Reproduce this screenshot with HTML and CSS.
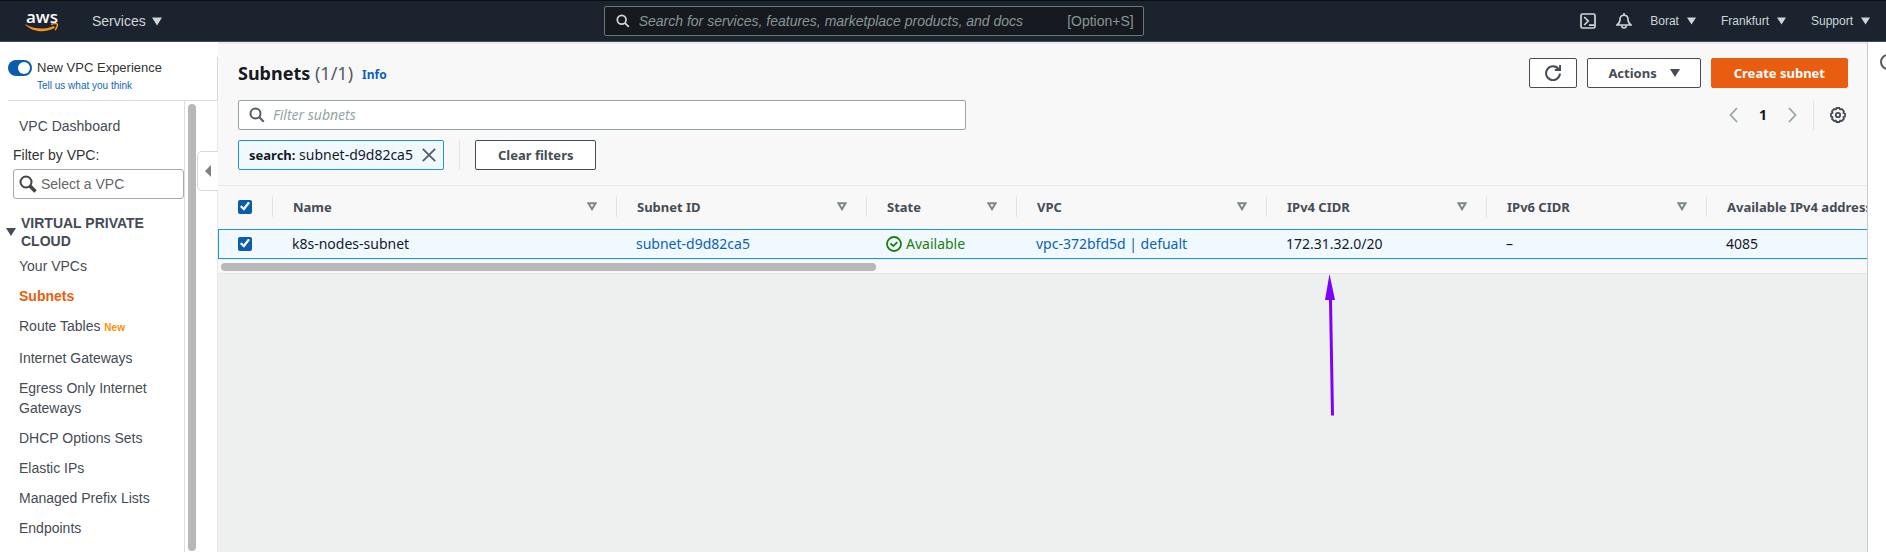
FILE: index.html
```html
<!DOCTYPE html>
<html lang="en">
<head>
<meta charset="utf-8">
<title>Subnets | VPC Management Console</title>
<link rel="stylesheet" href="styles.css">
</head>
<body>
<svg class="defs" aria-hidden="true">
  <symbol id="caret" viewBox="0 0 10 8"><path d="M0 0h10L5 8z" fill="currentColor"/></symbol>
  <symbol id="sort" viewBox="0 0 10 9"><path d="M1.4 1.2h7.2L5 7.2z" fill="none" stroke="currentColor" stroke-width="2"/></symbol>
  <symbol id="search" viewBox="0 0 16 16"><circle cx="6.5" cy="6.5" r="5" fill="none" stroke="currentColor" stroke-width="2"/><path d="M10.3 10.3l4.4 4.4" stroke="currentColor" stroke-width="2"/></symbol>
</svg>
<header class="topbar">
  <a class="logo" href="#" aria-label="AWS home">
    <span class="logo-text">aws</span>
    <svg class="logo-smile" viewBox="0 0 34 9"><path d="M.5 1.2C9 6.500 20 6.800 29 3l1 1.800C20 10.200 8 9.400.2 1.800z" fill="#f7941d"/><path d="M26.200 1.600c2.200-1.300 5.400-1.100 6-.6.5.6-.2 3.900-2.200 6" fill="none" stroke="#f7941d" stroke-width="1.500"/></svg>
  </a>
  <button class="menu services">Services <svg class="caret"><use href="#caret"/></svg></button>
  <label class="global-search">
    <svg class="icon-s"><use href="#search"/></svg>
    <input type="search" aria-label="Search" placeholder="Search for services, features, marketplace products, and docs">
    <span>[Option+S]</span>
  </label>
  <nav class="account" aria-label="Account">
    <button class="menu shell" aria-label="CloudShell"><svg class="icon" viewBox="0 0 16 16"><g fill="none" stroke="currentColor" stroke-width="1.700"><rect x="1" y="1" width="14" height="14" rx="1.500"/><path d="M4.200 4l4 4-4 4M9 12.200h5"/></g></svg></button>
    <button class="menu bell" aria-label="Notifications"><svg class="icon" viewBox="0 0 16 16"><g fill="none" stroke="currentColor" stroke-width="1.600"><path d="M1 12h14c-2.200-1.400-3-2.500-3-5.500C12 3.800 10.500 2.300 8 2.300S4 3.800 4 6.500C4 9.500 3.200 10.600 1 12z"/><path d="M8 0v2M5.800 12.500c0 3.300 4.400 3.300 4.400 0"/></g></svg></button>
    <button class="menu user">Borat <svg class="caret small"><use href="#caret"/></svg></button>
    <button class="menu region">Frankfurt <svg class="caret small"><use href="#caret"/></svg></button>
    <button class="menu">Support <svg class="caret small"><use href="#caret"/></svg></button>
  </nav>
</header>
<div class="shell-grid">
  <aside class="sidebar">
    <div class="experience">
      <input type="checkbox" class="toggle" id="exp" checked>
      <div><label for="exp">New VPC Experience</label><a href="#">Tell us what you think</a></div>
    </div>
    <div class="side-body">
      <nav class="side-nav" aria-label="VPC">
        <a class="item" href="#">VPC Dashboard</a>
        <label class="filter-label" for="vpc">Filter by VPC:</label>
        <div class="vpc-select">
          <svg viewBox="0 0 18 18"><circle cx="7" cy="7" r="5.500" fill="none" stroke="currentColor" stroke-width="2"/><path d="M11 11l5.500 5.500" stroke="currentColor" stroke-width="3.500"/></svg>
          <input id="vpc" type="text" placeholder="Select a VPC">
        </div>
        <h2><svg class="caret"><use href="#caret"/></svg><span>VIRTUAL PRIVATE CLOUD</span></h2>
        <a class="item" href="#">Your VPCs</a>
        <a class="item current" href="#">Subnets</a>
        <a class="item" href="#">Route Tables <b>New</b></a>
        <a class="item" href="#">Internet Gateways</a>
        <a class="item" href="#">Egress Only Internet Gateways</a>
        <a class="item" href="#">DHCP Options Sets</a>
        <a class="item" href="#">Elastic IPs</a>
        <a class="item" href="#">Managed Prefix Lists</a>
        <a class="item" href="#">Endpoints</a>
        <a class="item" href="#">Endpoint Services</a>
      </nav>
      <div class="v-scroll"></div>
      <button class="collapse" aria-label="Collapse navigation"><svg viewBox="0 0 6 12"><path d="M6 0v12L0 6z" fill="currentColor"/></svg></button>
    </div>
  </aside>
  <main class="content">
    <section class="panel">
      <div class="tools">
        <div class="bar">
          <h1>Subnets <span>(1/1)</span></h1>
          <a class="info" href="#">Info</a>
          <div class="actions">
            <button class="btn refresh" aria-label="Refresh"><svg class="icon" viewBox="0 0 16 16"><path d="M14.900 8.500A6.900 6.900 0 1 1 13.600 4.200M15.100 0v5.100H9.800" fill="none" stroke="currentColor" stroke-width="2"/></svg></button>
            <button class="btn">Actions <svg class="caret"><use href="#caret"/></svg></button>
            <button class="btn primary">Create subnet</button>
          </div>
        </div>
        <div class="bar">
          <label class="filter"><svg class="icon"><use href="#search"/></svg><input type="search" aria-label="Filter subnets" placeholder="Filter subnets"></label>
          <div class="pager">
            <button aria-label="Previous page"><svg viewBox="0 0 9 16"><path d="M8 1L1.500 8 8 15" fill="none" stroke="currentColor" stroke-width="1.800"/></svg></button>
            <span>1</span>
            <button aria-label="Next page"><svg viewBox="0 0 9 16"><path d="M1 1l6.500 7L1 15" fill="none" stroke="currentColor" stroke-width="1.800"/></svg></button>
            <i class="divider"></i>
            <button class="gear" aria-label="Preferences"><svg viewBox="0 0 16 16"><g fill="none" stroke="currentColor"><path stroke-width="1.800" stroke-linejoin="round" d="M6.500 1h3l.6 1.500 1.600-.5 2.200 2.200-.5 1.700 1.600.7v3l-1.600.6.500 1.700-2.200 2.100-1.600-.5-.6 1.500h-3l-.7-1.500-1.600.5L2 11.900l.5-1.700L1 9.600v-3l1.500-.7L2 4.200 4.200 2l1.600.5z"/><circle cx="8" cy="8" r="2.200" stroke-width="1.800"/></g></svg></button>
          </div>
        </div>
        <div class="bar">
          <div class="token"><span><b>search:</b> subnet-d9d82ca5</span><button aria-label="Remove filter"><svg viewBox="0 0 14 14"><path d="M.8.800l12.400 12.400M13.200.800L.8 13.200" stroke="currentColor" stroke-width="1.800"/></svg></button></div>
          <i class="divider"></i>
          <button class="btn clear">Clear filters</button>
        </div>
      </div>
      <div class="table-wrap">
        <table>
          <colgroup><col class="c-check"><col class="c-name"><col class="c-wide"><col class="c-state"><col class="c-wide"><col class="c-cidr"><col class="c-cidr"><col class="c-wide"></colgroup>
          <thead>
            <tr>
              <th><input type="checkbox" class="check" aria-label="Select all" checked></th>
              <th><div>Name <button aria-label="Sort by name"><svg><use href="#sort"/></svg></button></div></th>
              <th><div>Subnet ID <button aria-label="Sort by subnet ID"><svg><use href="#sort"/></svg></button></div></th>
              <th><div>State <button aria-label="Sort by state"><svg><use href="#sort"/></svg></button></div></th>
              <th><div>VPC <button aria-label="Sort by VPC"><svg><use href="#sort"/></svg></button></div></th>
              <th><div>IPv4 CIDR <button aria-label="Sort by IPv4 CIDR"><svg><use href="#sort"/></svg></button></div></th>
              <th><div>IPv6 CIDR <button aria-label="Sort by IPv6 CIDR"><svg><use href="#sort"/></svg></button></div></th>
              <th><div>Available IPv4 addresses</div></th>
            </tr>
          </thead>
          <tbody>
            <tr>
              <td><input type="checkbox" class="check" aria-label="Select k8s-nodes-subnet" checked></td>
              <td>k8s-nodes-subnet</td>
              <td><a href="#">subnet-d9d82ca5</a></td>
              <td><span class="ok"><svg viewBox="0 0 16 16"><g fill="none" stroke="currentColor" stroke-width="1.800"><circle cx="8" cy="8" r="7"/><path d="M4.500 7.500l2.800 2.600 4-3.900"/></g></svg>Available</span></td>
              <td><a href="#">vpc-372bfd5d | defualt</a></td>
              <td>172.31.32.0/20</td>
              <td>–</td>
              <td>4085</td>
            </tr>
          </tbody>
        </table>
      </div>
      <div class="h-scroll"><div></div></div>
    </section>
    <svg class="pointer" viewBox="0 0 12 142" aria-hidden="true"><path d="M5.500 0L11 26H1zM5 26h3l2 115.500H7z" fill="#7f00ff"/></svg>
  </main>
  <aside class="help" aria-label="Help">
    <svg viewBox="0 0 16 16"><circle cx="8" cy="8" r="7" fill="none" stroke="#545b64" stroke-width="2"/></svg>
  </aside>
</div>
</body>
</html>
```

FILE: styles.css
```css
* { box-sizing: border-box; }
body {
  margin: 0;
  height: 100vh;
  display: flex;
  flex-direction: column;
  overflow: hidden;
  font: 14px/20px "Noto Sans", sans-serif;
  color: #16191f;
  background: #fff;
}
.defs { display: none; }
button { font: inherit; color: inherit; background: none; border: 0; padding: 0; cursor: pointer; }
a { color: #0a62b8; text-decoration: none; }
svg { display: block; flex: none; }
input { font: inherit; color: inherit; min-width: 0; }
.caret { width: 10px; height: 8px; }
.icon { width: 16px; height: 16px; }
.icon-s { width: 14px; height: 14px; }

.topbar {
  flex: none;
  height: 42px;
  display: flex;
  align-items: center;
  padding: 0 16px 0 25px;
  background: #1b232f;
  border-top: 1px solid #0c0d10;
  border-bottom: 1px solid #414a55;
  color: #d0d6d6;
  font-family: "Liberation Sans", Arial, sans-serif;
}
.logo { width: 34px; color: #fff; display: flex; flex-direction: column; align-items: center; }
.logo-text { font: 600 17px/13px "Open Sans", sans-serif; }
.logo-smile { width: 34px; height: 9px; }
.menu { display: flex; align-items: center; gap: 8px; }
.services { margin-left: 33px; gap: 6px; }
.services .caret { height: 9px; }
.global-search {
  flex: 0 10 540px;
  height: 30px;
  margin-left: 442px;
  padding: 0 9px 0 11px;
  display: flex;
  align-items: center;
  gap: 9px;
  background: #161a20;
  border: 1px solid #687875;
  border-radius: 2px;
}
.global-search input { flex: 1; padding: 0; background: none; border: 0; outline: 0; }
.global-search input::placeholder { color: #879693; font-style: italic; opacity: 1; }
.global-search span { color: #879693; }
.account { margin-left: auto; display: flex; align-items: center; font-size: 12px; }
.shell { margin-right: 20px; }
.bell { margin-right: 18px; }
.user, .region { margin-right: 25px; }
.small { width: 9px; }

.shell-grid { flex: 1; min-height: 0; display: grid; grid-template-columns: 218px minmax(0, 1fr) 19px; }

.sidebar {
  display: flex;
  flex-direction: column;
  min-height: 0;
  font-family: "Liberation Sans", Arial, sans-serif;
  color: #444b54;
}
.experience {
  display: flex;
  gap: 5px;
  margin: 15px 0 0 8px;
  height: 44px;
  border-right: 1px solid #d5dbdb;
  border-bottom: 1px solid #d5dbdb;
}
.experience label { display: block; font-size: 13px; line-height: 22px; color: #333; }
.experience a { display: block; font-size: 10px; line-height: 14px; color: #1166bb; }
.toggle {
  appearance: none;
  flex: none;
  margin: 3px 0 0;
  width: 24px;
  height: 16px;
  padding: 2px;
  border-radius: 8px;
  background: #0a5cad;
  display: flex;
  justify-content: flex-end;
}
.toggle::after { content: ""; width: 12px; height: 12px; border-radius: 50%; background: #fff; }
.side-body { flex: 1; min-height: 0; display: flex; border-right: 1px solid #e8eaea; position: relative; }
.side-nav { width: 185px; overflow: hidden; border-right: 1px solid #ddd; padding-top: 10px; }
.item { display: block; padding: 5px 12px 5px 19px; color: #444b54; }
.item b { font-size: 10px; color: #ff8f00; }
.current { font-weight: bold; color: #e95d0c; }
.filter-label { display: block; padding: 4px 13px; line-height: 20px; color: #333; }
.vpc-select {
  margin-left: 13px;
  height: 30px;
  display: flex;
  align-items: center;
  gap: 4px;
  padding: 0 5px;
  border: 1px solid #aaa;
  border-radius: 3px;
  color: #444;
}
.vpc-select svg { width: 18px; height: 18px; }
.vpc-select input { flex: 1; border: 0; padding: 0; outline: 0; }
.vpc-select input::placeholder { color: #666; opacity: 1; }
.side-nav h2 { display: flex; align-items: center; gap: 5px; margin: 15px 0 1px 6px; font-size: 14px; line-height: 18px; }
.side-nav h2 span { flex: 1; padding-right: 20px; }
.v-scroll { width: 8px; margin: 3px 0 1px 3px; border-radius: 4px; background: #b8b8b8; }
.collapse {
  position: absolute;
  top: 50px;
  right: -1px;
  width: 21px;
  height: 40px;
  padding-left: 7px;
  border: 1px solid #d5dbdb;
  border-right: 0;
  border-radius: 5px 0 0 5px;
  background: #fff;
  color: #808080;
}
.collapse svg { width: 6px; height: 12px; }

.content { position: relative; background: #eef0ef; }
.panel { background: #f8f8f8; border-top: 2px solid #eaeded; border-bottom: 1px solid #e4e7e7; }
.tools { display: flex; flex-direction: column; gap: 10px; padding: 14px 19px 15px 20px; }
.bar { display: flex; align-items: center; height: 30px; }
.bar:first-child { margin-bottom: 2px; }
h1 { margin: 0; font-size: 18px; line-height: 24px; }
h1 span { font-weight: 400; color: #545b64; }
.info { margin: 4px 0 0 9px; font-size: 12px; font-weight: 700; }
.actions { margin-left: auto; display: flex; gap: 10px; }
.btn {
  height: 30px;
  padding: 0 20px;
  display: flex;
  align-items: center;
  justify-content: center;
  gap: 13px;
  border: 1px solid #454c55;
  border-radius: 2px;
  background: #fff;
  color: #454c55;
  font-size: 13px;
  font-weight: 700;
  white-space: nowrap;
}
.refresh { padding: 0 15px; }
.clear { padding: 0 22px; }
.primary { padding: 0 22px; background: #e85d10; border-color: #e85d10; color: #fff; }
.filter {
  flex: 0 1 728px;
  height: 30px;
  display: flex;
  align-items: center;
  gap: 8px;
  padding: 0 10px;
  background: #fff;
  border: 1px solid #95a5a6;
  border-radius: 2px;
  color: #545b64;
}
.filter input { flex: 1; border: 0; padding: 0; outline: 0; background: none; }
.filter input::placeholder { color: #95a5a6; font-style: italic; opacity: 1; }
.pager { margin-left: auto; display: flex; align-items: center; padding-right: 2px; color: #95a5a6; }
.pager svg { width: 9px; height: 16px; }
.pager span { padding: 0 21px; font-weight: 700; color: #16191f; }
.pager .gear { color: #454c55; }
.pager .gear svg { width: 16px; }
.divider { width: 1px; height: 30px; margin: 0 16px; background: #e1e5e5; }
.token + .divider { margin: 0 15px; }
.token {
  height: 30px;
  display: flex;
  align-items: center;
  gap: 9px;
  padding: 0 7px 0 10px;
  background: #f0f9ff;
  border: 1px solid #1e98c8;
  border-radius: 2px;
}
.token b { font-size: 13px; }
.token button { color: #545b64; }
.token svg { width: 14px; height: 14px; }

.table-wrap { overflow: hidden; border-top: 1px solid #e8eaea; }
table { table-layout: fixed; width: 100%; min-width: 1738px; border-spacing: 0; border-collapse: separate; }
.c-check { width: 54px; }
.c-name { width: 344px; }
.c-wide { width: 250px; }
.c-state { width: 150px; }
.c-cidr { width: 220px; }
th { height: 43px; padding: 0 0 2px; text-align: left; font-size: 13px; color: #454c55; white-space: nowrap; }
th div {
  display: flex;
  align-items: center;
  justify-content: space-between;
  height: 21px;
  padding: 0 19px 0 20px;
  border-left: 1px solid #e1e5e5;
}
th svg { width: 10px; height: 9px; color: #7b8887; }
td { height: 30px; padding: 0 20px; background: #f0f9ff; border: solid #1e98c8; border-width: 1px 0; white-space: nowrap; }
th:first-child { padding-left: 20px; }
td:first-child { border-left-width: 1px; padding: 0 0 1px 19px; }
.ok { display: flex; align-items: center; gap: 4px; color: #1d7f0a; }
.ok svg { width: 16px; height: 16px; }
.check {
  appearance: none;
  display: grid;
  place-items: center;
  width: 14px;
  height: 14px;
  margin: 0;
  border-radius: 2px;
  background: #0a5cad;
}
.check::after {
  content: "";
  width: 10px;
  height: 10px;
  background: #fff;
  clip-path: polygon(0 55%, 15% 38%, 36% 60%, 82% 0, 100% 14%, 40% 92%);
}
.h-scroll { padding: 3px 3px 2px; border-top: 1px solid #e8eaea; }
.h-scroll div { width: 40%; max-width: 655px; height: 8px; border-radius: 4px; background: #b8b8b8; }
.pointer { position: absolute; left: 1106px; top: 232px; width: 12px; height: 142px; }

.help { overflow: hidden; border-left: 1px solid #c8cccc; background: #fff; padding: 12px 0 0 12px; }
.help svg { width: 16px; height: 16px; }
```
